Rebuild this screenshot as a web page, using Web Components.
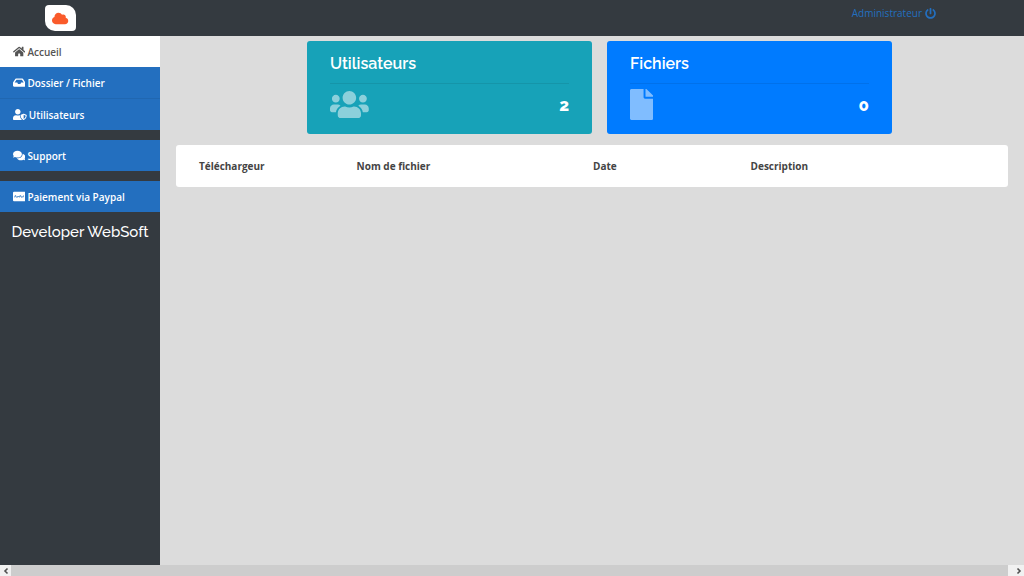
<!DOCTYPE html>
<html lang="fr">
<head>
<meta charset="utf-8">
<title>Accueil</title>
<style>
html, body { margin: 0; height: 100%; }
body { font: 10px/16px "Open Sans", sans-serif; color: #444; background: #dcdcdc; --display: Raleway, Lato, sans-serif; }
</style>
</head>
<body>
<app-shell>
  <top-bar slot="top" user="Administrateur"></top-bar>
  <side-nav slot="side"></side-nav>
  <stat-row>
    <stat-card label="Utilisateurs" value="2" icon="users" style="--card:#17a2b8"></stat-card>
    <stat-card label="Fichiers" value="0" icon="file" style="--card:#007bff"></stat-card>
  </stat-row>
  <file-table></file-table>
  <scroll-strip slot="bottom"></scroll-strip>
</app-shell>
<script>
const ICONS = {
  home: ["0 0 576 512", '<path d="M280.37 148.26L96 300.11V464a16 16 0 0 0 16 16l112.06-.29a16 16 0 0 0 15.92-16V368a16 16 0 0 1 16-16h64a16 16 0 0 1 16 16v95.64a16 16 0 0 0 16 16.05L464 480a16 16 0 0 0 16-16V300L295.67 148.26a12.19 12.19 0 0 0-15.3 0zM571.6 251.47L488 182.56V44.05a12 12 0 0 0-12-12h-56a12 12 0 0 0-12 12v72.61L318.47 43a48 48 0 0 0-61 0L4.34 251.47a12 12 0 0 0-1.6 16.9l25.5 31A12 12 0 0 0 45.15 301l235.22-193.74a12.19 12.19 0 0 1 15.3 0L530.9 301a12 12 0 0 0 16.9-1.6l25.5-31a12 12 0 0 0-1.7-16.93z"/>'],
  inbox: ["0 0 576 512", '<path d="M567.938 243.908L462.25 85.374A48.003 48.003 0 0 0 422.311 64H153.689a48 48 0 0 0-39.938 21.374L8.062 243.908A47.994 47.994 0 0 0 0 270.533V400c0 26.51 21.49 48 48 48h480c26.51 0 48-21.49 48-48V270.533a47.994 47.994 0 0 0-8.062-26.625zM162.252 128h251.497l85.333 128H376l-32 64H232l-32-64H76.918l85.334-128z"/>'],
  shield: ["0 0 640 512", '<path d="M622.3 271.1l-115.2-45c-4.1-1.6-12.6-3.7-22.2 0l-115.2 45c-10.7 4.2-17.7 14-17.7 24.9 0 111.6 68.7 188.8 132.9 213.9 9.6 3.7 18 1.6 22.2 0C558.4 489.9 640 420.5 640 296c0-10.9-7-20.7-17.7-24.9zM496 462.4V273.3l95.5 37.3c-5.6 87.1-60.9 135.4-95.5 151.8zM224 256c70.7 0 128-57.3 128-128S294.7 0 224 0 96 57.3 96 128s57.3 128 128 128zm96 40c0-2.5.8-4.8 1.1-7.2-2.5-.1-4.9-.8-7.5-.8h-16.7c-22.2 10.2-46.9 16-72.9 16s-50.6-5.8-72.9-16h-16.7C60.2 288 0 348.2 0 422.4V464c0 26.5 21.5 48 48 48h352c6.8 0 13.3-1.5 19.2-4-54-42.9-99.2-116.7-99.2-212z"/>'],
  comments: ["0 0 576 512", '<path d="M416 192c0-88.4-93.1-160-208-160S0 103.6 0 192c0 34.3 14.1 65.9 38 92-13.4 30.2-35.5 54.2-35.8 54.5-2.2 2.3-2.8 5.7-1.5 8.7S4.8 352 8 352c36.6 0 66.9-12.3 88.7-25 32.2 15.7 70.3 25 111.3 25 114.9 0 208-71.6 208-160zm122 220c23.9-26 38-57.7 38-92 0-66.9-53.5-124.2-129.3-148.1.9 6.6 1.3 13.3 1.3 20.1 0 105.9-107.7 192-240 192-10.8 0-21.3-.8-31.7-1.9C207.8 439.6 281.8 480 368 480c41 0 79.1-9.2 111.3-25 21.8 12.7 52.1 25 88.7 25 3.2 0 6.1-1.9 7.3-4.8 1.3-2.9.7-6.3-1.5-8.7-.3-.3-22.4-24.2-35.8-54.5z"/>'],
  card: ["0 0 576 512", '<rect y="32" width="576" height="448" rx="48"/><path fill="none" stroke="#236fbf" stroke-width="36" d="M80 300l16-84h32q28 22-12 46M160 272q24-40 48-10l-8 30h-36M232 238l20 44 32-44M306 300l16-84h32q28 22-12 46M386 272q24-40 48-10l-8 30h-36M472 292l16-82"/>'],
  users: ["0 0 640 512", '<path d="M96 224c35.3 0 64-28.7 64-64s-28.7-64-64-64-64 28.7-64 64 28.7 64 64 64zm448 0c35.3 0 64-28.7 64-64s-28.7-64-64-64-64 28.7-64 64 28.7 64 64 64zm32 32h-64c-17.6 0-33.5 7.1-45.1 18.6 40.3 22.1 68.9 62 75.1 109.4h66c17.7 0 32-14.3 32-32v-32c0-35.3-28.7-64-64-64zm-256 0c61.9 0 112-50.1 112-112S381.9 32 320 32 208 82.1 208 144s50.1 112 112 112zm76.8 32h-8.3c-20.8 10-43.9 16-68.5 16s-47.6-6-68.5-16h-8.3C179.6 288 128 339.6 128 403.2V432c0 26.5 21.5 48 48 48h288c26.5 0 48-21.5 48-48v-28.8c0-63.6-51.6-115.2-115.2-115.2zm-223.7-13.4C161.5 263.1 145.6 256 128 256H64c-35.3 0-64 28.7-64 64v32c0 17.7 14.3 32 32 32h65.9c6.3-47.4 34.9-87.3 75.2-109.4z"/>'],
  file: ["0 0 384 512", '<path d="M224 136V0H24C10.7 0 0 10.7 0 24v464c0 13.3 10.7 24 24 24h336c13.3 0 24-10.7 24-24V160H248c-13.2 0-24-10.8-24-24zm160-14.1v6.1H256V0h6.1c6.4 0 12.5 2.5 17 7l97.9 98c4.5 4.5 7 10.6 7 16.9z"/>'],
  power: ["0 0 512 512", '<path d="M400 54.1c63 45 104 118.6 104 201.9 0 136.8-110.8 247.7-247.5 248C120 504.3 8.2 393 8 256.4 7.9 173.1 48.9 99.3 111.8 54.2c11.7-8.3 28-4.8 35 7.7L162.6 90c5.9 10.5 3.1 23.8-6.6 31-41.5 30.8-68 79.6-68 134.9-.1 92.3 74.5 168.1 168 168.1 91.6 0 168.6-74.2 168-169.1-.3-51.8-24.7-101.8-68.1-134-9.7-7.2-12.4-20.5-6.5-30.9l15.8-28.1c7-12.4 23.2-16.1 34.8-7.8zM296 264V24c0-13.3-10.7-24-24-24h-32c-13.3 0-24 10.7-24 24v240c0 13.3 10.7 24 24 24h32c13.3 0 24-10.7 24-24z"/>'],
  cloud: ["0 0 640 512", '<path d="M537.6 226.6c4.1-10.7 6.4-22.4 6.4-34.6 0-53-43-96-96-96-19.7 0-38.1 6-53.3 16.2C367 64.2 315.3 32 256 32c-88.4 0-160 71.6-160 160 0 2.7.1 5.4.2 8.1C40.2 219.8 0 273.2 0 336c0 79.5 64.5 144 144 144h368c70.7 0 128-57.3 128-128 0-61.9-44-113.6-102.4-125.4z"/>'],
  left: ["0 0 8 8", '<path fill="none" stroke="currentColor" stroke-width="1.6" d="M5.5 1.5L3 4l2.5 2.5"/>'],
  right: ["0 0 8 8", '<path fill="none" stroke="currentColor" stroke-width="1.6" d="M2.5 1.5L5 4 2.5 6.5"/>']
};

class Base extends HTMLElement {
  connectedCallback() {
    if (!this.shadowRoot) this.attachShadow({ mode: "open" }).innerHTML = this.render();
  }
}
const define = (name, render) => customElements.define(name, class extends Base {
  render() { return render(this); }
});

define("ui-icon", el => {
  const [box, body] = ICONS[el.getAttribute("name")];
  return `<style>:host{display:block;flex:none}svg{display:block;height:var(--size,11px);width:auto;fill:currentColor}</style>
  <svg viewBox="${box}" aria-hidden="true">${body}</svg>`;
});

define("app-shell", () => `<style>
  :host{display:grid;grid-template:auto 1fr auto / 160px 1fr;min-height:100vh}
  .top,.bottom{grid-column:1/-1}
  aside{background:#343a40}
  main{padding:5px 16px;min-width:0}
  </style>
  <header class="top"><slot name="top"></slot></header>
  <aside><slot name="side"></slot></aside>
  <main><slot></slot></main>
  <div class="bottom"><slot name="bottom"></slot></div>`);

define("top-bar", el => `<style>
  :host{display:flex;justify-content:space-between;align-items:flex-start;height:36px;box-sizing:border-box;padding:5px 88px 0 45px;background:#343a40}
  .logo{display:grid;place-items:center;width:31px;height:26px;background:#fff;border-radius:4px 10px 4px 10px;color:#fa5b2b;--size:13px}
  .user{display:flex;align-items:center;gap:3px;color:#236fbf;text-decoration:none}
  </style>
  <a class="logo" href="#" aria-label="Accueil"><ui-icon name="cloud"></ui-icon></a>
  <a class="user" href="#">${el.getAttribute("user")}<ui-icon name="power"></ui-icon></a>`);

define("nav-item", el => `<style>
  :host{display:block;background:#236fbf;color:#fff}
  :host([active]){background:#fff;color:#555}
  a{display:flex;align-items:center;gap:2px;height:31px;padding:0 13px;color:inherit;text-decoration:none;font-weight:600}
  </style>
  <a href="#"><ui-icon name="${el.getAttribute("icon")}"></ui-icon><slot></slot></a>`);

define("side-nav", () => `<style>
  :host,nav{display:flex;flex-direction:column}
  nav{gap:10px}
  .group nav-item:last-child{border-top:1px solid #2067b1}
  h2{margin:10px 0 0;font:500 15px/20px var(--display);color:#fff;text-align:center;white-space:nowrap}
  </style>
  <nav>
    <div class="group"><nav-item icon="home" active>Accueil</nav-item>
    <nav-item icon="inbox">Dossier / Fichier</nav-item>
    <nav-item icon="shield">Utilisateurs</nav-item></div>
    <nav-item icon="comments">Support</nav-item>
    <nav-item icon="card">Paiement via Paypal</nav-item>
  </nav>
  <h2>Developer WebSoft</h2>`);

define("stat-row", () => `<style>
  :host{display:grid;grid-template-columns:1fr 1fr;gap:15px;padding:0 116px 0 131px}
  </style><slot></slot>`);

define("stat-card", el => `<style>
  :host{display:block;box-sizing:border-box;height:93px;padding:13px 23px;background:var(--card);color:#fff;border-radius:3px;font-family:var(--display)}
  h3{margin:0;padding-bottom:9px;border-bottom:1px solid rgba(0,0,0,.08);font-size:16px;line-height:20px;font-weight:600}
  div{display:flex;justify-content:space-between;align-items:center;height:41px}
  ui-icon{--size:31px;opacity:.5}
  b{font-size:17px;line-height:20px;font-weight:800}
  </style>
  <h3>${el.getAttribute("label")}</h3>
  <div><ui-icon name="${el.getAttribute("icon")}"></ui-icon><b>${el.getAttribute("value")}</b></div>`);

define("file-table", () => `<style>
  :host{display:block;margin-top:11px;padding:9px 29px 9px 15px;background:#fff;border-radius:3px}
  table{width:100%;table-layout:fixed;border-collapse:collapse}
  th{box-sizing:border-box;padding:4px 8px;text-align:left;font-weight:700}
  .n{width:20%}.w{width:30%}
  </style>
  <table><thead><tr><th class="n" scope="col">Téléchargeur</th><th class="w" scope="col">Nom de fichier</th><th class="n" scope="col">Date</th><th class="w" scope="col">Description</th></tr></thead></table>`);

define("scroll-strip", () => `<style>
  :host{display:flex;height:11px;background:#f1f1f1;color:#505050}
  button{display:grid;place-items:center;width:11px;padding:0;border:0;background:#f1f1f1;color:inherit;--size:8px}
  button:last-child{width:16px;padding-left:6px}
  .thumb{flex:1;background:#cdcdcd}
  </style>
  <button aria-label="Défiler à gauche"><ui-icon name="left"></ui-icon></button>
  <div class="thumb"></div>
  <button aria-label="Défiler à droite"><ui-icon name="right"></ui-icon></button>`);
</script>
</body>
</html>
